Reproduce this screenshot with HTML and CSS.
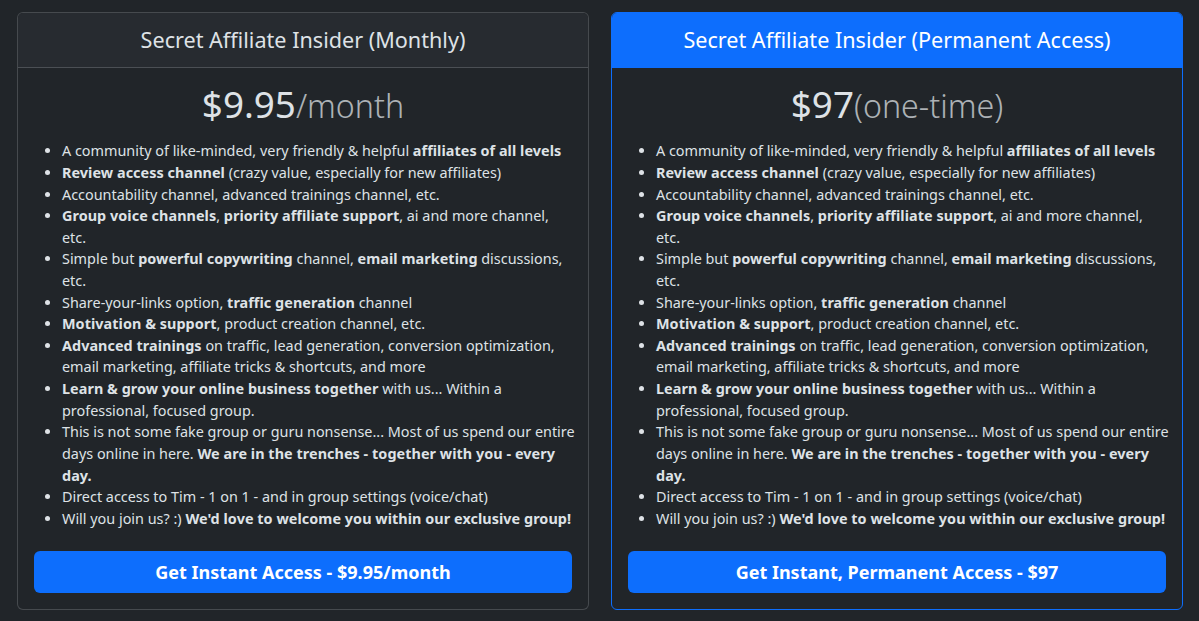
FILE: index.html
```html
<!DOCTYPE html>
<html lang="en">
<head>
<meta charset="utf-8">
<title>Secret Affiliate Insider</title>
<link rel="stylesheet" href="styles.css">
</head>
<body>
<div class="plans">
  <div class="card">
    <div class="card-header"><h4 class="plan-name">Secret Affiliate Insider (Monthly)</h4></div>
    <div class="card-body">
      <h1 class="price">$9.95<small>/month</small></h1>
      <ul class="features">
        <li>A community of like-minded, very friendly &amp; helpful <b>affiliates of all levels</b></li>
        <li><b>Review access channel</b> (crazy value, especially for new affiliates)</li>
        <li>Accountability channel, advanced trainings channel, etc.</li>
        <li><b>Group voice channels</b>, <b>priority affiliate support</b>, ai and more channel, etc.</li>
        <li>Simple but <b>powerful copywriting</b> channel, <b>email marketing</b> discussions, etc.</li>
        <li>Share-your-links option, <b>traffic generation</b> channel</li>
        <li><b>Motivation &amp; support</b>, product creation channel, etc.</li>
        <li><b>Advanced trainings</b> on traffic, lead generation, conversion optimization, email marketing, affiliate tricks &amp; shortcuts, and more</li>
        <li><b>Learn &amp; grow your online business together</b> with us... Within a professional, focused group.</li>
        <li>This is not some fake group or guru nonsense... Most of us spend our entire days online in here. <b>We are in the trenches - together with you - every day.</b></li>
        <li>Direct access to Tim - 1 on 1 - and in group settings (voice/chat)</li>
        <li>Will you join us? :) <b>We'd love to welcome you within our exclusive group!</b></li>
      </ul>
      <button class="btn" type="button">Get Instant Access - $9.95/month</button>
    </div>
  </div>
  <div class="card card-primary">
    <div class="card-header"><h4 class="plan-name">Secret Affiliate Insider (Permanent Access)</h4></div>
    <div class="card-body">
      <h1 class="price">$97<small>(one-time)</small></h1>
      <ul class="features">
        <li>A community of like-minded, very friendly &amp; helpful <b>affiliates of all levels</b></li>
        <li><b>Review access channel</b> (crazy value, especially for new affiliates)</li>
        <li>Accountability channel, advanced trainings channel, etc.</li>
        <li><b>Group voice channels</b>, <b>priority affiliate support</b>, ai and more channel, etc.</li>
        <li>Simple but <b>powerful copywriting</b> channel, <b>email marketing</b> discussions, etc.</li>
        <li>Share-your-links option, <b>traffic generation</b> channel</li>
        <li><b>Motivation &amp; support</b>, product creation channel, etc.</li>
        <li><b>Advanced trainings</b> on traffic, lead generation, conversion optimization, email marketing, affiliate tricks &amp; shortcuts, and more</li>
        <li><b>Learn &amp; grow your online business together</b> with us... Within a professional, focused group.</li>
        <li>This is not some fake group or guru nonsense... Most of us spend our entire days online in here. <b>We are in the trenches - together with you - every day.</b></li>
        <li>Direct access to Tim - 1 on 1 - and in group settings (voice/chat)</li>
        <li>Will you join us? :) <b>We'd love to welcome you within our exclusive group!</b></li>
      </ul>
      <button class="btn" type="button">Get Instant, Permanent Access - $97</button>
    </div>
  </div>
</div>
</body>
</html>
```
FILE: styles.css
```css
* { box-sizing: border-box; }
html, body {
  margin: 0;
  background: #212529;
  color: #dee2e6;
  font-family: "Noto Sans", "Liberation Sans", sans-serif;
  font-size: 16px;
  line-height: 1.5;
}
.plans {
  display: grid;
  grid-template-columns: 572px 572px;
  gap: 22px;
  padding: 12px 16px 10px 17px;
}
.card {
  display: flex;
  flex-direction: column;
  border: 1px solid rgba(222, 226, 230, 0.2);
  border-radius: 6px;
  background: #212529;
  overflow: hidden;
}
.card-header {
  background: #272b30;
  border-bottom: 1px solid rgba(222, 226, 230, 0.2);
  padding: 12px 16px 12px;
  text-align: center;
}
.card-primary { border-color: #0d6efd; }
.card-primary .card-header {
  background: #0d6efd;
  border-bottom-color: #0d6efd;
  color: #fff;
}
.plan-name {
  margin: 0;
  font-size: 21.6px;
  font-weight: 400;
  line-height: 1.4;
}
.card-body {
  flex: 1;
  display: flex;
  flex-direction: column;
  padding: 14px 16px 16px;
}
.price {
  margin: 0 0 14px;
  text-align: center;
  font-size: 36.8px;
  font-weight: 400;
  line-height: 1.2;
}
.price small {
  font-size: 0.875em;
  font-weight: 300;
  color: rgba(222, 226, 230, 0.75);
}
.features {
  margin: 0 -3px 22px 0;
  padding-left: 28px;
  font-size: 14.4px;
  line-height: 1.5;
}
.features b {
  font-weight: 700;
  letter-spacing: 0.05px;
}
.btn {
  margin-top: auto;
  width: 100%;
  height: 42px;
  border: 0;
  border-radius: 6px;
  background: #0d6efd;
  color: #fff;
  font-family: inherit;
  font-size: 18px;
  font-weight: 700;
  cursor: pointer;
}
```
